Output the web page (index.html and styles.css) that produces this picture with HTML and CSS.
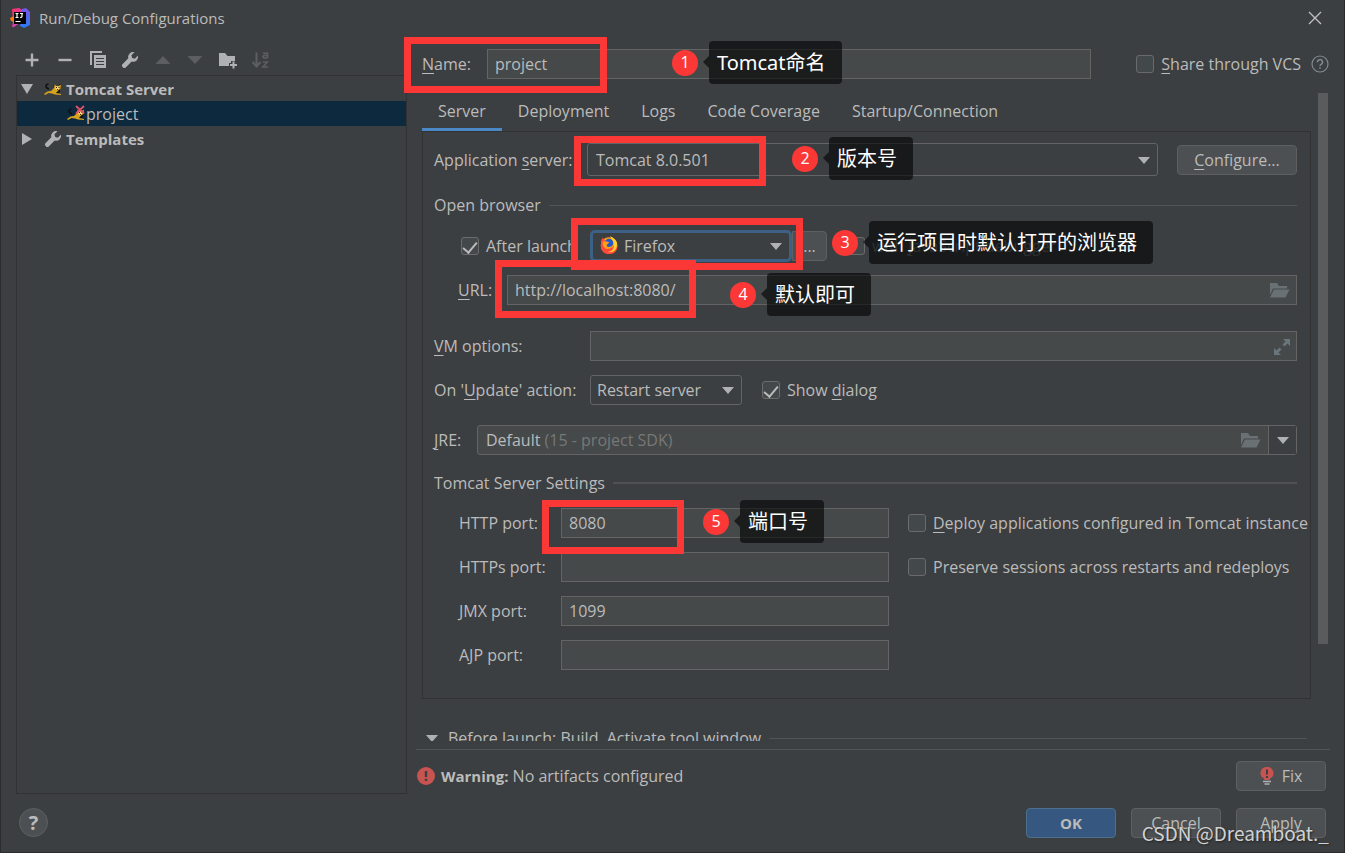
FILE: index.html
```html
<!DOCTYPE html>
<html lang="zh-CN">
<head>
<meta charset="utf-8">
<title>Run/Debug Configurations</title>
<link rel="stylesheet" href="styles.css">
</head>
<body>
<svg class="defs" aria-hidden="true">
  <symbol id="wrench" viewBox="0 0 18 18"><path d="M17 4.6 13.8 7.700 11.200 7 10.400 4.300 13.600 1.200A5 5 0 0 0 7.300 7.300L1.200 13.400a2.100 2.100 0 0 0 0 2.200l1.100 1.100a2.100 2.100 0 0 0 2.200 0L10.700 10.600A5 5 0 0 0 17 4.600z" fill="#afb1b3"/></symbol>
  <symbol id="arrow" viewBox="0 0 12 7"><path d="M0 0h12L6 7z" fill="#afb1b3"/></symbol>
  <symbol id="folder" viewBox="0 0 20 15"><path d="M0 0h7l2 3h8v2.500H3L0 12z" fill="#6a7174"/><path d="M4 6.500h15.500L15.500 14.500H0z" fill="#6a7174"/></symbol>
  <symbol id="cat" viewBox="0 0 18 16">
    <path d="M5 8C1 7 1 3 4.500 3M10 7l6-2-1 6-4 1M10 4l1 3M16 3v2" fill="none" stroke="#111" stroke-width="1.500"/>
    <path d="M0 13 3.500 10.500 7 10 10 7 10.500 3.500 12.500 5h2L17 3.500 16.500 8 14 9.500 12 12 17 13v1L11 13.500 8 12.500 4.500 12 1 14z" fill="#d8a31c"/>
    <path d="M11.500 5.500h4l-.5 2.500-2 1-1.500-1z" fill="#f6da83"/><path d="M12 6h1v1h-1zM14.500 6h1v1h-1zM13 8h1v1h-1z" fill="#3a2400"/>
  </symbol>
</svg>
<div class="window">
  <header class="titlebar">
    <svg class="logo" viewBox="0 0 20 20">
      <defs>
        <linearGradient id="lg1" x1="0" y1="0" x2="1" y2="1"><stop offset="0" stop-color="#fe315d"/><stop offset="1" stop-color="#b74af7"/></linearGradient>
        <linearGradient id="lg2" x1="0" y1="0" x2="0" y2="1"><stop offset="0" stop-color="#7b55e8"/><stop offset="1" stop-color="#2b7bf5"/></linearGradient>
      </defs>
      <path d="M2 1 9 0l6 4-1 8L4 19H2l1-5z" fill="url(#lg1)"/>
      <path d="M0 10 4 8v6l-3-1z" fill="#f97a12"/>
      <path d="M12 1 16 0l4 4v13l-6 3-4-2z" fill="url(#lg2)"/>
      <path d="M4 4h12v12H4z" fill="#050505"/>
      <path d="M5.500 5.500h3M7 5.500v4M5.500 9.500h3M10 5.500h3M12 5.500v3q0 1-2 1M5.500 13.500h5" fill="none" stroke="#fff" stroke-width="1.200"/>
    </svg>
    <h1 class="title">Run/Debug Configurations</h1>
    <button class="plain close" aria-label="Close"><svg viewBox="0 0 14 14"><path d="M1 1l12 12M13 1 1 13" stroke="#c0c2c4" stroke-width="1.300"/></svg></button>
  </header>

  <div class="body">
    <aside class="sidebar">
      <div class="toolbar">
        <button class="plain" aria-label="Add"><svg viewBox="0 0 18 18"><path d="M9 2.500v13M2.500 9h13" stroke="#afb1b3" stroke-width="2.400"/></svg></button>
        <button class="plain" aria-label="Remove"><svg viewBox="0 0 18 18"><path d="M2.500 9h13" stroke="#afb1b3" stroke-width="2.400"/></svg></button>
        <button class="plain" aria-label="Copy"><svg viewBox="0 0 18 18"><path d="M1 0h12v2H3v12H1z" fill="#afb1b3"/><path d="M5 4h12v13H5z" fill="#afb1b3"/><path d="M7 7.500h8M7 10.500h8M7 13.500h8" stroke="#3c3f41" stroke-width="1.200"/></svg></button>
        <button class="plain" aria-label="Edit templates"><svg><use href="#wrench"/></svg></button>
        <button class="plain" aria-label="Move up"><svg viewBox="0 0 18 18"><path d="M9 5l7.500 8h-15z" fill="#5c5e60"/></svg></button>
        <button class="plain" aria-label="Move down"><svg viewBox="0 0 18 18"><path d="M9 13 1.500 5h15z" fill="#5c5e60"/></svg></button>
        <button class="plain" aria-label="New folder"><svg viewBox="0 0 18 18"><path d="M0 2h6l2.500 3H16v5h-4v2h-2v3H0z" fill="#afb1b3"/><path d="M14.500 10.500v7M11 14h7" stroke="#afb1b3" stroke-width="2"/></svg></button>
        <button class="plain" aria-label="Sort"><svg viewBox="0 0 18 18"><path d="M4.500 1.500v13M.5 11l4 4.500 4-4.500" fill="none" stroke="#5c5e60" stroke-width="2"/><path d="M11 2.300h4.500V7M15.500 4.500h-3q-1.500 0-1.500 1.200T12.500 7h3M10.800 11h4.400L11 16h5" fill="none" stroke="#5c5e60" stroke-width="1.600"/></svg></button>
      </div>
      <ul class="tree">
        <li class="node group"><svg class="twist" viewBox="0 0 12 12"><path d="M0 1h12L6 11z" fill="#afb1b3"/></svg><svg class="nicon"><use href="#cat"/></svg><span>Tomcat Server</span></li>
        <li class="node leaf selected"><svg class="nicon" viewBox="0 0 18 16"><use href="#cat"/><path d="M9 0l8 7.500M17 0 9 7.500" stroke="#e0516a" stroke-width="1.800"/></svg><span>project</span></li>
        <li class="node group"><svg class="twist" viewBox="0 0 12 12"><path d="M1 0v12l10-6z" fill="#afb1b3"/></svg><svg class="nicon"><use href="#wrench"/></svg><span>Templates</span></li>
      </ul>
    </aside>

    <main class="main">
      <div class="namerow">
        <label for="name"><u>N</u>ame:</label>
        <input class="field" id="name" type="text" value="project">
        <label class="check"><input type="checkbox"><span><u>S</u>hare through VCS</span></label>
        <svg class="hint" viewBox="0 0 18 18"><circle cx="9" cy="9" r="8" fill="none" stroke="#7f8b91" stroke-width="1.200"/><path d="M6.500 7.200a2.500 2.500 0 1 1 3.700 2.100Q9 10 9 11" fill="none" stroke="#7f8b91" stroke-width="1.500"/><path d="M8.200 12.300h1.600v1.500H8.200z" fill="#7f8b91"/></svg>
      </div>

      <div class="scroller">
        <div class="content">
          <nav class="tabs">
            <button class="tab active">Server</button>
            <button class="tab">Deployment</button>
            <button class="tab">Logs</button>
            <button class="tab">Code Coverage</button>
            <button class="tab">Startup/Connection</button>
          </nav>
          <section class="panel">
            <div class="row server">
              <label class="lead" for="server">Application <u>s</u>erver:</label>
              <span class="combo grow"><select class="tall" id="server"><option>Tomcat 8.0.501</option></select><svg class="caret"><use href="#arrow"/></svg></span>
              <button class="btn configure"><span><u>C</u>onfigure...</span></button>
            </div>
            <h2 class="heading">Open browser</h2>
            <div class="row launch">
              <label class="check after"><input type="checkbox" checked><span>After launch</span></label>
              <span class="combo browser"><select class="focused" aria-label="Browser"><option>Firefox</option></select>
                <svg class="fox" viewBox="0 0 18 18"><circle cx="9" cy="9.500" r="8.300" fill="#ff9a16"/><path d="M1 5Q1.500 3 3 1.500l1 2.500 3 1-2 3q0 5 5 4.500 5-1 4-6l1-3q3 4 2.500 8A8.500 8.500 0 0 1 1 12z" fill="#ff4a3a"/><path d="M10 0q6 3 7 7 .5 5-3 8-3 2-6 1 6-1 6-7l-1-4z" fill="#ffd02e"/><circle cx="9" cy="7" r="4.200" fill="#2359c9"/><path d="M3 5l4 .5 2.500 1-2 1.500-1 2q2 2 5 0-2 4-6 2.500Q1.500 10 3 5z" fill="#ff9d1e"/></svg>
                <svg class="caret"><use href="#arrow"/></svg></span>
              <button class="btn more" aria-label="Browsers">...</button>
              <label class="check debugger"><input type="checkbox" disabled><span>with <u>J</u>avaScript debugger</span></label>
            </div>
            <div class="row url">
              <label for="url"><u>U</u>RL:</label>
              <span class="combo grow"><input class="field" id="url" type="text" value="http://localhost:8080/"><svg class="infolder"><use href="#folder"/></svg></span>
            </div>
            <div class="row vm">
              <label class="lead" for="vm"><u>V</u>M options:</label>
              <span class="combo grow"><input class="field" id="vm" type="text"><svg class="expand" viewBox="0 0 16 16"><path d="M9 0h7v7l-2.500-2.500-3 3L8.500 5.500l3-3zM0 9l2.500 2.500 3-3 2 2-3 3L7 16H0z" fill="#6a7579"/></svg></span>
            </div>
            <div class="row update">
              <label class="lead" for="update">On '<u>U</u>pdate' action:</label>
              <span class="combo restart"><select id="update"><option>Restart server</option></select><svg class="caret"><use href="#arrow"/></svg></span>
              <label class="check"><input type="checkbox" checked><span>Show <u>d</u>ialog</span></label>
            </div>
            <div class="row jre">
              <span id="jrelabel"><u>J</u>RE:</span>
              <button class="jrebox" aria-labelledby="jrelabel"><span>Default <span class="dim">(15 - project SDK)</span></span><svg class="jfolder"><use href="#folder"/></svg><span class="drop"><svg><use href="#arrow"/></svg></span></button>
            </div>
            <h2 class="heading thick">Tomcat Server Settings</h2>
            <div class="ports">
              <label for="http">HTTP port:</label><input class="field" id="http" type="text" value="8080">
              <label class="check"><input type="checkbox"><span><u>D</u>eploy applications configured in Tomcat instance</span></label>
              <label for="https">HTTPs port:</label><input class="field" id="https" type="text">
              <label class="check"><input type="checkbox"><span>Preserve sessions across restarts and redeploys</span></label>
              <label for="jmx">JMX port:</label><input class="field" id="jmx" type="text" value="1099"><span></span>
              <label for="ajp">AJP port:</label><input class="field" id="ajp" type="text"><span></span>
            </div>
          </section>
          <h2 class="heading before"><svg><use href="#arrow"/></svg>Before launch: Build, Activate tool window</h2>
        </div>
        <div class="track"><div class="thumb"></div></div>
      </div>

      <div class="warning">
        <svg class="alert" viewBox="0 0 18 18"><circle cx="9" cy="9" r="9" fill="#c75450"/><path d="M7.800 4h2.400v6H7.800zM7.800 11.800h2.400V14H7.800z" fill="#3c3f41"/></svg>
        <span><b>Warning:</b> No artifacts configured</span>
        <button class="btn wide fix"><svg viewBox="0 0 14 18"><path d="M7 0a6 6 0 0 1 3.200 11.300L9.500 13h-5l-.7-1.700A6 6 0 0 1 7 0z" fill="#c75450"/><path d="M6 2.500h2v5H6zM6 9h2v2H6z" fill="#3c3f41"/><path d="M3 14.500h8M4.500 17h5" stroke="#afb1b3" stroke-width="1.400"/></svg><span>Fix</span></button>
      </div>
    </main>
  </div>

  <footer class="footer">
    <button class="help" aria-label="Help">?</button>
    <button class="btn wide primary">OK</button>
    <button class="btn wide">Cancel</button>
    <button class="btn wide">Apply</button>
  </footer>

  <div class="notes">
    <div class="frame f1"></div><div class="frame f2"></div><div class="frame f3"></div><div class="frame f4"></div><div class="frame f5"></div>
    <div class="note n1"><span class="num">1</span><span class="tip">Tomcat命名</span></div>
    <div class="note n2"><span class="num">2</span><span class="tip">版本号</span></div>
    <div class="note n3"><span class="num">3</span><span class="tip">运行项目时默认打开的浏览器</span></div>
    <div class="note n4"><span class="num">4</span><span class="tip">默认即可</span></div>
    <div class="note n5"><span class="num">5</span><span class="tip">端口号</span></div>
  </div>
  <div class="watermark">CSDN @Dreamboat._</div>
</div>
</body>
</html>
```
FILE: styles.css
```css
* { box-sizing: border-box; }
body {
  margin: 0;
  background: #3c3f41;
  color: #bbbbbb;
  font: 16px/20px "Open Sans", "Noto Sans CJK SC", sans-serif;
}
button, input, select { font: inherit; color: inherit; margin: 0; }
.defs { position: absolute; width: 0; height: 0; }
u { text-underline-offset: 3px; text-decoration-thickness: 1px; text-decoration-skip-ink: none; }
h1, h2 { margin: 0; font-size: 16px; font-weight: 400; }
b { font-size: 15px; }

.window {
  position: relative;
  display: flex;
  flex-direction: column;
  height: 100vh;
  border: 1px solid #2b2b2b;
  border-top: 0;
  overflow: hidden;
}
.plain { display: grid; place-items: center; padding: 0; border: 0; background: none; }
.plain svg { width: 18px; height: 18px; }

.titlebar { display: flex; align-items: center; flex: none; height: 36px; padding: 0 22px 0 9px; }
.logo { width: 20px; height: 20px; margin-right: 9px; }
.title { flex: 1; font-size: 15px; }
.close svg { width: 14px; height: 14px; }

.body { display: flex; flex: 1; min-height: 0; }
.sidebar { display: flex; flex-direction: column; width: 391px; flex: none; margin-left: 15px; }
.toolbar { display: grid; grid-template-columns: repeat(8, 1fr); width: 261px; height: 39px; padding-top: 9px; }
.tree { flex: 1; margin: 0; padding: 0; list-style: none; border: 1px solid #323232; }
.node { display: flex; align-items: center; height: 25px; padding-left: 4px; }
.group { font-size: 15px; font-weight: 700; }
.twist { width: 12px; height: 12px; margin-right: 11px; }
.nicon { width: 18px; height: 18px; margin-right: 4px; }
.leaf { padding-left: 50px; }
.leaf .nicon { margin-right: 1px; }
.selected { background: #0d293e; }

.main { display: flex; flex-direction: column; flex: 1; min-width: 0; padding: 0 14px 0 9px; }
.namerow { display: flex; align-items: center; flex: none; height: 57px; padding: 0 1px 1px 6px; }
.namerow .field { flex: 1; margin: 0 45px 0 16px; }
.hint { width: 18px; height: 18px; margin-left: 10px; }

.field {
  width: 100%;
  min-width: 0;
  height: 30px;
  padding: 0 7px;
  border: 1px solid #646464;
  background: #45494a;
}
.check { display: flex; align-items: center; gap: 7px; white-space: nowrap; }
.check input {
  appearance: none;
  display: grid;
  justify-items: center;
  flex: none;
  width: 18px;
  height: 18px;
  padding-top: 1px;
  border: 1px solid #6b6b6b;
  border-radius: 3px;
  background: #43494a;
}
.check input:checked::after {
  content: "";
  width: 6px;
  height: 12px;
  border: solid #bbbbbb;
  border-width: 0 2px 2px 0;
  transform: rotate(40deg);
}

.scroller { display: flex; flex: 1; min-height: 0; overflow: hidden; }
.content { flex: 1; min-width: 0; padding-left: 6px; }
.track { flex: none; width: 10px; margin-left: 7px; margin-right: 2px; }
.thumb { height: 85%; background: #595b5d; }
.tabs { display: flex; height: 38px; }
.tab { padding: 0 16px; border: 0; border-bottom: 3px solid transparent; background: none; white-space: nowrap; }
.tab.active { border-bottom-color: #4a88c7; }
.panel { padding: 11px 13px 28px 11px; border: 1px solid #323232; }

.row { display: flex; align-items: center; }
.lead { width: 156px; flex: none; white-space: nowrap; }
.grow { flex: 1; min-width: 0; }
.combo { position: relative; display: block; }
.combo select {
  appearance: none;
  display: block;
  width: 100%;
  height: 30px;
  padding: 0 6px;
  border: 1px solid #646464;
  border-radius: 3px;
  background: #3c3f41;
}
.combo select.tall { height: 33px; padding: 0 8px; }
.combo select.focused { height: 32px; padding-left: 31px; border: 3px solid #3d6185; border-radius: 5px; }
.combo .field { display: block; }
.caret { position: absolute; right: 8px; top: 50%; width: 12px; height: 7px; margin-top: -3px; }
.browser .caret { right: 10px; }
.fox { position: absolute; left: 10px; top: 6px; width: 18px; height: 18px; }
.infolder { position: absolute; right: 7px; top: 8px; width: 20px; height: 15px; }
.expand { position: absolute; right: 7px; top: 8px; width: 16px; height: 16px; }

.btn {
  display: flex;
  align-items: center;
  justify-content: center;
  height: 30px;
  padding: 0;
  border: 1px solid #5e6060;
  border-radius: 4px;
  background: #4c5052;
}
.server .lead { width: 153px; }
.configure { width: 120px; margin-left: 19px; }
.heading { display: flex; align-items: center; gap: 8px; }
.heading::after { content: ""; flex: 1; height: 1px; background: #515557; }
.heading.thick::after { height: 2px; background: #515151; }
.server + .heading { margin-top: 19px; }
.launch { height: 32px; margin-top: 15px; padding-left: 27px; }
.after { width: 129px; overflow: hidden; }
.browser { width: 202px; }
.more { width: 35px; border-radius: 0 4px 4px 0; }
.debugger { margin-left: 20px; color: #777777; }
.url { margin-top: 13px; padding-left: 24px; }
.url label { width: 49px; flex: none; }
.vm { margin-top: 26px; }
.update { margin-top: 14px; }
.restart { width: 152px; margin-right: 20px; }
.jre { margin-top: 20px; }
.jre > span { width: 43px; flex: none; }
.jrebox {
  display: flex;
  align-items: center;
  flex: 1;
  height: 30px;
  padding: 0 0 0 8px;
  border: 1px solid #646464;
  border-radius: 3px;
  background: #45494a;
}
.dim { color: #777777; }
.jfolder { width: 20px; height: 15px; margin: 0 7px 0 auto; }
.drop { display: grid; place-items: center; width: 28px; height: 28px; border-left: 1px solid #646464; background: #3c3f41; }
.drop svg { width: 12px; height: 7px; }
.thick { margin-top: 18px; }
.ports {
  display: grid;
  grid-template-columns: 102px minmax(0, 328px) 1fr;
  align-items: center;
  row-gap: 14px;
  margin-top: 15px;
  padding-left: 25px;
}
.ports .check { width: 0; margin-left: 19px; }
.before { margin: 29px 4px 0; }
.before svg { width: 12px; height: 7px; margin-right: 2px; }

.warning {
  display: flex;
  align-items: center;
  flex: none;
  margin-top: 8px;
  padding: 11px 4px 3px 1px;
  border-top: 1px solid #515557;
}
.alert { width: 18px; height: 18px; margin-right: 6px; }
.wide { width: 90px; }
.fix { margin-left: auto; gap: 8px; }
.fix svg { width: 14px; height: 18px; }
.footer { display: flex; align-items: center; gap: 15px; flex: none; height: 58px; padding: 0 18px 1px; }
.help {
  width: 29px;
  height: 29px;
  margin-right: auto;
  padding: 0;
  border: 1px solid #5e6060;
  border-radius: 50%;
  background: #4c5052;
  font-size: 20px;
  font-weight: 700;
}
.primary { border-color: #4c708c; background: #365880; font-size: 15px; font-weight: 700; }

/* Annotations drawn over the dialog */
.notes { position: absolute; inset: 0 0 0 -1px; pointer-events: none; }
.frame { position: absolute; border: 7px solid #fc3836; }
.f1 { left: 404px; top: 37px; width: 203px; height: 56px; }
.f2 { left: 574px; top: 136px; width: 192px; height: 50px; }
.f3 { left: 571px; top: 218px; width: 232px; height: 52px; }
.f4 { left: 495px; top: 260px; width: 201px; height: 58px; }
.f5 { left: 542px; top: 500px; width: 142px; height: 54px; }
.note { position: absolute; display: flex; align-items: center; height: 43px; }
.n1 { left: 672px; top: 41px; }
.n2 { left: 792px; top: 137px; }
.n3 { left: 832px; top: 221px; }
.n4 { left: 730px; top: 273px; }
.n5 { left: 703px; top: 500px; }
.num {
  width: 26px;
  height: 26px;
  border-radius: 50%;
  background: #fc3836;
  color: #ffffff;
  font-size: 16px;
  line-height: 24px;
  text-align: center;
}
.tip {
  position: relative;
  height: 43px;
  margin-left: 11px;
  padding: 0 16px 0 8px;
  border-radius: 4px;
  background: rgba(0, 0, 0, 0.6);
  color: #ffffff;
  font: 20px/43px "Noto Sans", "Noto Sans CJK SC", sans-serif;
  white-space: nowrap;
}
.tip::before {
  content: "";
  position: absolute;
  left: -6px;
  top: 15px;
  border: solid transparent;
  border-width: 6px 6px 6px 0;
  border-right-color: rgba(0, 0, 0, 0.6);
}
.watermark {
  position: absolute;
  right: 15px;
  bottom: 7px;
  color: #d2d2d2;
  font: 19px/24px "Noto Sans CJK SC", sans-serif;
  text-shadow: 1px 1px 2px #222222;
  pointer-events: none;
}
```
